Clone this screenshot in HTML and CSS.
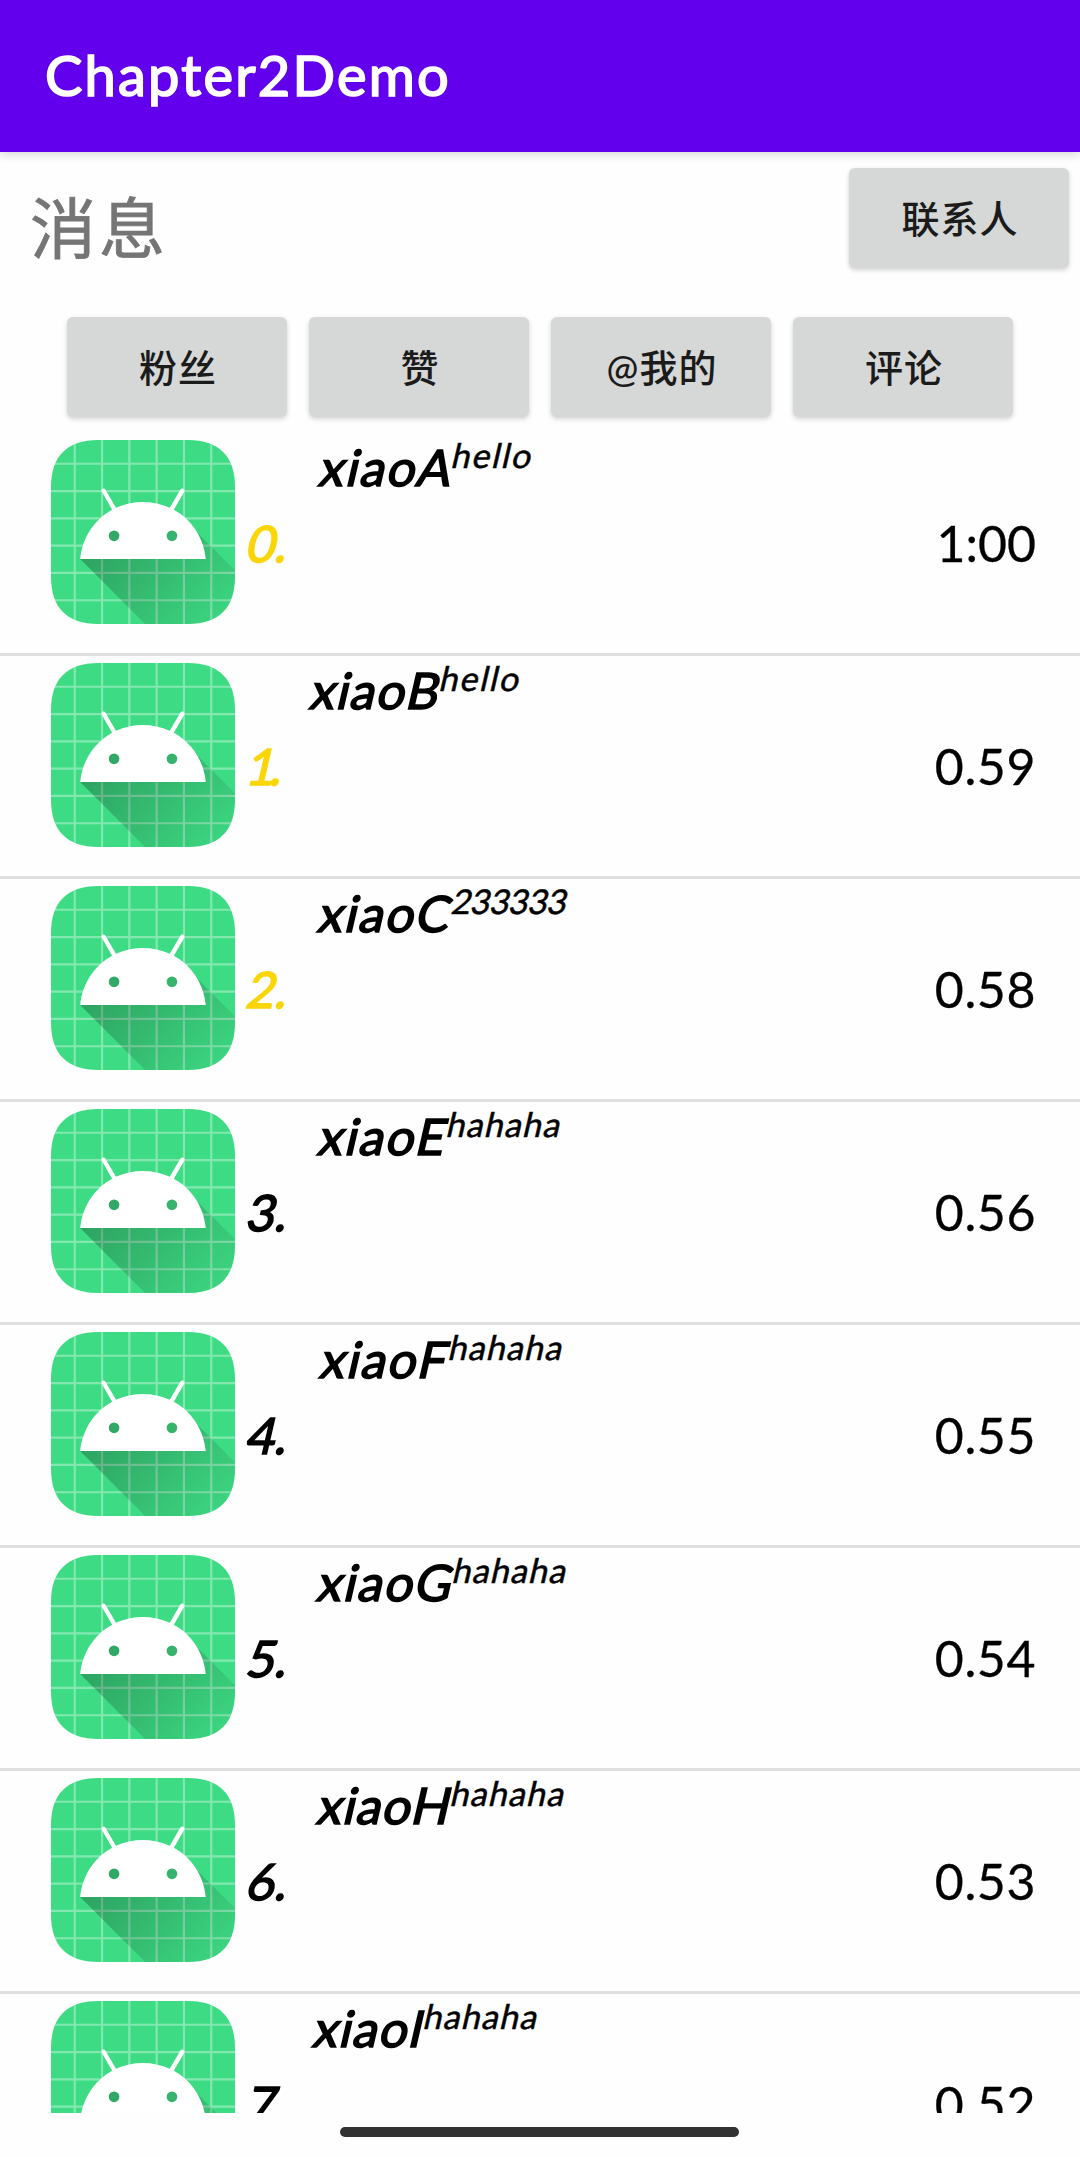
FILE: index.html
```html
<!DOCTYPE html>
<html lang="zh">
<head>
<meta charset="utf-8">
<title>Chapter2Demo</title>
<link rel="stylesheet" href="styles.css">
</head>
<body>
<svg class="defs" aria-hidden="true">
  <defs>
    <linearGradient id="shade" gradientUnits="userSpaceOnUse" x1="42.95" y1="49.6" x2="85.85" y2="92.5">
      <stop offset="0" stop-color="#000" stop-opacity=".267"/>
      <stop offset="1" stop-color="#000" stop-opacity="0"/>
    </linearGradient>
    <clipPath id="tile">
      <path d="M37.5 20.3H70.5C81.8 20.3 87.7 26.2 87.7 37.5V70.5C87.7 81.8 81.8 87.7 70.5 87.7H37.5C26.2 87.7 20.3 81.8 20.3 70.5V37.5C20.3 26.2 26.2 20.3 37.5 20.3Z"/>
    </clipPath>
    <symbol id="robot" viewBox="20.3 20.3 67.4 67.4">
      <g clip-path="url(#tile)">
        <path fill="#3ddc84" d="M20 20h68v68H20z"/>
        <path fill="none" stroke="#fff" stroke-opacity=".36" stroke-width=".8" d="M29 20v68M39 20v68M49 20v68M59 20v68M69 20v68M79 20v68M20 29h68M20 39h68M20 49h68M20 59h68M20 69h68M20 79h68"/>
        <path fill="url(#shade)" d="M31,63.928c0,0 6.4,-11 12.1,-13.1c7.2,-2.6 26,-1.4 26,-1.4l38.1,38.1L107,108.928l-32,-1L31,63.928z"/>
        <path fill="#fff" d="M65.3,45.828l3.8,-6.6c0.2,-0.4 0.1,-0.9 -0.3,-1.1c-0.4,-0.2 -0.9,-0.1 -1.1,0.3l-3.9,6.7c-6.3,-2.8 -13.4,-2.8 -19.7,0l-3.9,-6.7c-0.2,-0.4 -0.7,-0.5 -1.1,-0.3C38.8,38.328 38.7,38.828 38.9,39.228l3.8,6.6C36.2,49.428 31.7,56.028 31,63.928h46C76.3,56.028 71.8,49.428 65.3,45.828z"/>
        <circle cx="43.4" cy="55.4" r="1.95" fill="#32a866"/>
        <circle cx="64.6" cy="55.4" r="1.95" fill="#36b36d"/>
      </g>
    </symbol>
  </defs>
</svg>
<div class="screen">
  <header class="appbar"><h1>Chapter2Demo</h1></header>
  <div class="top">
    <h2>消息</h2>
    <button class="btn">联系人</button>
  </div>
  <nav class="tabs">
    <button class="btn">粉丝</button>
    <button class="btn">赞</button>
    <button class="btn">@我的</button>
    <button class="btn">评论</button>
  </nav>
  <ul class="list">
    <li class="row hot a"><svg class="avatar"><use href="#robot"/></svg><span class="num">0.</span><span class="name">xiaoA</span><span class="msg hello">hello</span><span class="time colon">1:00</span></li>
    <li class="row hot b"><svg class="avatar"><use href="#robot"/></svg><span class="num">1.</span><span class="name">xiaoB</span><span class="msg hello">hello</span><span class="time">0.59</span></li>
    <li class="row hot c"><svg class="avatar"><use href="#robot"/></svg><span class="num">2.</span><span class="name">xiaoC</span><span class="msg digits">233333</span><span class="time">0.58</span></li>
    <li class="row e"><svg class="avatar"><use href="#robot"/></svg><span class="num">3.</span><span class="name">xiaoE</span><span class="msg">hahaha</span><span class="time">0.56</span></li>
    <li class="row f"><svg class="avatar"><use href="#robot"/></svg><span class="num">4.</span><span class="name">xiaoF</span><span class="msg">hahaha</span><span class="time">0.55</span></li>
    <li class="row g"><svg class="avatar"><use href="#robot"/></svg><span class="num">5.</span><span class="name">xiaoG</span><span class="msg">hahaha</span><span class="time">0.54</span></li>
    <li class="row h"><svg class="avatar"><use href="#robot"/></svg><span class="num">6.</span><span class="name">xiaoH</span><span class="msg">hahaha</span><span class="time">0.53</span></li>
    <li class="row i"><svg class="avatar"><use href="#robot"/></svg><span class="num">7.</span><span class="name">xiaoI</span><span class="msg">hahaha</span><span class="time">0.52</span></li>
  </ul>
  <footer class="gesture"><span class="pill"></span></footer>
</div>
</body>
</html>
```
FILE: styles.css
```css
* { box-sizing: border-box; margin: 0; padding: 0; }
body { background: #fefefe; font-family: Lato, "Noto Sans CJK SC", sans-serif; color: #000; }
.defs { position: absolute; width: 0; height: 0; }
.screen { width: 1080px; height: 2157px; display: flex; flex-direction: column; overflow: hidden; }
.appbar { height: 152px; flex: none; background: #6200ee; color: #fff; display: flex; align-items: center; padding: 0 0 3px 45px; box-shadow: 0 2px 10px rgba(0,0,0,.17); }
.appbar h1 { font-size: 56px; font-weight: 400; line-height: 70px; letter-spacing: 2.2px; -webkit-text-stroke: 1.7px #fff; }
.top { height: 154px; flex: none; display: flex; justify-content: space-between; align-items: flex-start; padding: 16px 11px 0 30px; }
.top h2 { font-size: 66px; font-weight: 400; color: #757575; line-height: 80px; letter-spacing: 3px; padding-top: 20px; -webkit-text-stroke: .8px #757575; }
.btn { width: 220px; height: 100px; border: 0; border-radius: 6px; padding: 0 0 0 2px; background: #d6d7d7; color: #1b1b1b; box-shadow: 0 2px 5px rgba(0,0,0,.18); font: 500 38px/50px Lato, "Noto Sans CJK SC", sans-serif; letter-spacing: 1px; }
.tabs { height: 127px; flex: none; display: flex; gap: 22px; padding: 11px 0 0 67px; }
.list { height: 1680px; flex: none; list-style: none; overflow: hidden; }
.row { height: 223px; display: flex; align-items: flex-start; border-bottom: 3px solid #dfdfdf; padding: 4px 44px 0 51px; }
.avatar { width: 184px; height: 184px; flex: none; margin-top: 3px; }

/* Slanted upright face, sheared about the baseline */
.num, .name, .msg { display: block; white-space: nowrap; transform: skewX(-13deg); }
.num, .name { font-size: 50px; font-weight: 400; line-height: 60px; transform-origin: 0 50px; flex: none; -webkit-text-stroke: 1.6px currentColor; }
.num { width: var(--num); margin: 76px 2px 0 9px; }
.name { width: var(--name); letter-spacing: var(--track, 2px); }
.msg { font-size: 34px; line-height: 40px; margin-top: -9px; padding-top: 7px; letter-spacing: 1.2px; transform-origin: 0 40px; -webkit-text-stroke: .5px currentColor; }
.msg.hello { letter-spacing: 1.8px; }
.msg.digits { letter-spacing: -.6px; }
.time { margin: 76px 0 0 auto; font-size: 50px; line-height: 60px; letter-spacing: .6px; -webkit-text-stroke: .3px currentColor; }
.time.colon { letter-spacing: 0; }
.hot .num { color: #fad507; }

.a { --num: 71px; --name: 133px; --track: 2px; }
.b { --num: 62px; --name: 130px; --track: 1.6px; }
.b .num { letter-spacing: -5px; }
.c { --num: 70px; --name: 134px; --track: 1.9px; }
.e { --num: 70px; --name: 129px; }
.f { --num: 72px; --name: 129px; }
.g { --num: 69px; --name: 136px; --track: 1.9px; }
.h { --num: 69px; --name: 134px; --track: 1.2px; }
.i { --num: 65px; --name: 111px; --track: 1.4px; }

.gesture { flex: 1; display: flex; justify-content: center; padding: 14px 1px 0 0; }
.pill { width: 399px; height: 10px; border-radius: 5px; background: #323232; }
```
